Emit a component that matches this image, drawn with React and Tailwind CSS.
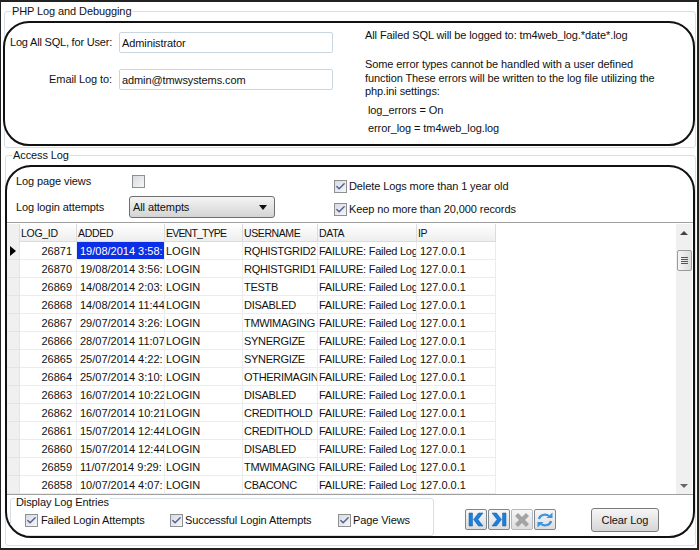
import { Check } from 'lucide-react';

const rows = [
  ['26871', '19/08/2014 3:58:', 'RQHISTGRID2'],
  ['26870', '19/08/2014 3:56:', 'RQHISTGRID1'],
  ['26869', '14/08/2014 2:03:', 'TESTB'],
  ['26868', '14/08/2014 11:44', 'DISABLED'],
  ['26867', '29/07/2014 3:26:', 'TMWIMAGING'],
  ['26866', '28/07/2014 11:07', 'SYNERGIZE'],
  ['26865', '25/07/2014 4:22:', 'SYNERGIZE'],
  ['26864', '25/07/2014 3:10:', 'OTHERIMAGING'],
  ['26863', '16/07/2014 10:22', 'DISABLED'],
  ['26862', '16/07/2014 10:21', 'CREDITHOLD'],
  ['26861', '15/07/2014 12:44', 'CREDITHOLD'],
  ['26860', '15/07/2014 12:44', 'DISABLED'],
  ['26859', '11/07/2014 9:29:', 'TMWIMAGING'],
  ['26858', '10/07/2014 4:07:', 'CBACONC'],
];

function CheckBox({ checked }) {
  return (
    <span className="flex items-center justify-center w-[13px] h-[13px] shrink-0 border border-[#8e8f8f] bg-gradient-to-br from-[#d8dbe0] to-[#f6f6f6]">
      {checked && <Check className="w-[11px] h-[11px] text-[#4a5f97]" strokeWidth={3} />}
    </span>
  );
}

function Cell({ w, className = '', children }) {
  return (
    <div className={`shrink-0 h-full overflow-hidden whitespace-nowrap border-r border-[#ececec] leading-[19px] ${w} ${className}`}>
      {children}
    </div>
  );
}

function HeadCell({ w, className = 'tracking-[-0.3px]', children }) {
  return <div className={`shrink-0 h-full border-r border-[#dcdcdc] pl-[1px] leading-[18px] text-[10.5px] ${w} ${className}`}>{children}</div>;
}

function NavButton({ disabled, children }) {
  return (
    <button className={`flex items-center justify-center w-[22px] h-[21px] rounded-[2px] border bg-gradient-to-b from-[#f6f6f6] to-[#dedede] ${disabled ? 'border-[#b4b8bb]' : 'border-[#7d8790]'}`}>
      {children}
    </button>
  );
}

export default function App() {
  return (
    <div className="w-[699px] h-[550px] overflow-hidden bg-white text-[11px] tracking-[-0.1px] text-[#111] border-t-2 border-l border-r-2 border-b-2 border-[#222] font-['Liberation_Sans',sans-serif] pt-[2px]">
      {/* PHP log group */}
      <fieldset className="ml-[3px] mr-[1px] h-[144px] rounded-[3px] border border-[#d5dfe5]">
        <legend className="ml-[6px] px-[1px] leading-[14px] h-[14px]">PHP Log and Debugging</legend>
        <div className="-ml-[2px] mt-[3px] h-[125px] rounded-[26px] border-2 border-[#111] flex">
          <div className="w-[360px] shrink-0 pt-[9px]">
            <div className="flex items-center h-[21px]">
              <span className="w-[107px] text-right whitespace-nowrap tracking-[-0.2px]">Log All SQL, for User:</span>
              <input readOnly value="Administrator" className="ml-[7px] w-[214px] h-[21px] rounded-[2px] border border-[#c9d6df] px-[2px] outline-none" />
            </div>
            <div className="flex items-center h-[21px] mt-[16px]">
              <span className="w-[107px] text-right">Email Log to:</span>
              <input readOnly value="admin@tmwsystems.com" className="ml-[7px] w-[214px] h-[21px] rounded-[2px] border border-[#c9d6df] px-[2px] outline-none" />
            </div>
          </div>
          <div className="pt-[6px] leading-[13.5px]">
            <p className="h-[15px]">All Failed SQL will be logged to: tm4web_log.*date*.log</p>
            <p className="mt-[14px] w-[300px]">Some error types cannot be handled with a user defined function These errors will be written to the log file utilizing the php.ini settings:</p>
            <p className="mt-[5px] ml-[3px]">log_errors = On</p>
            <p className="mt-[5px] ml-[3px]">error_log = tm4web_log.log</p>
          </div>
        </div>
      </fieldset>

      {/* Access log group */}
      <fieldset className="ml-[4px] mr-[1px] h-[398px] rounded-[3px] border border-[#d5dfe5]">
        <legend className="ml-[6px] px-[1px] leading-[14px] h-[14px]">Access Log</legend>
        <div className="-ml-[1px] mt-[3px] h-[373px] rounded-[26px] border-2 border-[#111] flex flex-col overflow-hidden">
          <div className="h-[55px] shrink-0 flex">
            <div className="w-[327px] shrink-0 pl-[9px]">
              <div className="flex items-center h-[14px] mt-[7px]">
                <span className="w-[116px]">Log page views</span>
                <CheckBox />
              </div>
              <div className="flex items-center mt-[8px]">
                <span className="w-[113px]">Log login attempts</span>
                <div className="relative w-[146px] h-[22px] rounded-[3px] border border-[#6f6f6f] bg-gradient-to-b from-[#f4f4f4] to-[#d4d4d4] pl-[3px] leading-[20px]">
                  All attempts
                  <span className="absolute right-[7px] top-[8px] w-0 h-0 border-l-[4px] border-r-[4px] border-t-[5px] border-l-transparent border-r-transparent border-t-[#111]" />
                </div>
              </div>
            </div>
            <div className="pt-[12px]">
              <div className="flex items-center gap-[2px] h-[14px]">
                <CheckBox checked />
                <span>Delete Logs more than 1 year old</span>
              </div>
              <div className="flex items-center gap-[2px] h-[14px] mt-[9px]">
                <CheckBox checked />
                <span>Keep no more than 20,000 records</span>
              </div>
            </div>
          </div>

          {/* Grid */}
          <div className="h-[273px] shrink-0 border-y border-[#a0a0a0] flex pt-[1px] tracking-normal">
            <div className="w-[669px] shrink-0">
              <div className="flex h-[18px]">
                <div className="w-[13px] shrink-0 border-r border-[#dcdcdc] bg-[#f0f0f0]" />
                <div className="flex h-full bg-gradient-to-b from-white to-[#eeeeee] border-b border-[#dcdcdc]">
                  <HeadCell w="w-[57px]">LOG_ID</HeadCell>
                  <HeadCell w="w-[88px]">ADDED</HeadCell>
                  <HeadCell w="w-[78px]" className="tracking-[-0.8px]">EVENT_TYPE</HeadCell>
                  <HeadCell w="w-[75px]" className="tracking-[-0.4px]">USERNAME</HeadCell>
                  <HeadCell w="w-[99px]">DATA</HeadCell>
                  <HeadCell w="w-[79px]">IP</HeadCell>
                </div>
              </div>
              {rows.map(([id, added, user], i) => (
                <div key={id} className="flex h-[18px]">
                  <div className="w-[13px] shrink-0 flex items-center border-r border-b border-[#e4e4e4] bg-[#f0f0f0]">
                    {i === 0 && <span className="ml-[3px] w-0 h-0 border-y-[5px] border-l-[6px] border-y-transparent border-l-black" />}
                  </div>
                  <div className="flex h-full border-b border-[#ececec]">
                    <Cell w="w-[57px]" className="text-right pr-[4px]">{id}</Cell>
                    <Cell w="w-[88px]" className={`pl-[3px] ${i === 0 ? 'bg-[#0a2fe6] text-white' : ''}`}>{added}</Cell>
                    <Cell w="w-[78px]" className="pl-[1px]">LOGIN</Cell>
                    <Cell w="w-[75px]" className="pl-[1px] tracking-[-0.3px]">{user}</Cell>
                    <Cell w="w-[99px]" className="pl-[1px] tracking-[-0.25px]">FAILURE: Failed Log</Cell>
                    <Cell w="w-[79px]" className="pl-[3px]">127.0.0.1</Cell>
                  </div>
                </div>
              ))}
            </div>
            <div className="w-[16px] shrink-0 bg-[#f0f0f0] flex flex-col items-center">
              <span className="mt-[7px] w-0 h-0 border-l-[4px] border-r-[4px] border-b-[4px] border-l-transparent border-r-transparent border-b-[#444]" />
              <div className="mt-[15px] w-[15px] h-[21px] rounded-[2px] border border-[#9a9a9a] bg-gradient-to-r from-[#f6f6f6] to-[#dcdcdc] flex flex-col items-center justify-center gap-[1px]">
                <span className="w-[7px] h-px bg-[#555]" />
                <span className="w-[7px] h-px bg-[#555]" />
                <span className="w-[7px] h-px bg-[#555]" />
                <span className="w-[7px] h-px bg-[#555]" />
              </div>
              <span className="mt-auto mb-[6px] w-0 h-0 border-l-[4px] border-r-[4px] border-t-[4px] border-l-transparent border-r-transparent border-t-[#666]" />
            </div>
          </div>

          {/* Footer */}
          <div className="flex items-start">
            <fieldset className="ml-[3px] -mt-[4px] w-[424px] h-[45px] rounded-[3px] border border-[#d5dfe5]">
              <legend className="ml-[4px] px-[1px] leading-[14px] h-[14px] relative top-[4px]">Display Log Entries</legend>
              <div className="flex items-center h-[14px] mt-[8px]">
                <span className="ml-[14px] w-[145px] flex items-center gap-[3px]"><CheckBox checked />Failed Login Attempts</span>
                <span className="w-[168px] flex items-center gap-[2px]"><CheckBox checked />Successful Login Attempts</span>
                <span className="flex items-center gap-[2px]"><CheckBox checked />Page Views</span>
              </div>
            </fieldset>
            <div className="flex gap-[1px] ml-[31px] mt-[14px]">
              <NavButton>
                <svg width="18" height="17" viewBox="0 0 18 17">
                  <path d="M2 2h3.5v13H2zM16 2h-4.5L6.5 8.5l5 6.5H16l-5-6.5z" fill="#1f7fd8" stroke="#0f5fb0" strokeWidth="0.5" />
                </svg>
              </NavButton>
              <NavButton>
                <svg width="18" height="17" viewBox="0 0 18 17">
                  <path d="M16 2h-3.5v13H16zM2 2h4.5l5 6.5-5 6.5H2l5-6.5z" fill="#1f7fd8" stroke="#0f5fb0" strokeWidth="0.5" />
                </svg>
              </NavButton>
              <NavButton disabled>
                <svg width="16" height="16" viewBox="0 0 16 16">
                  <path d="M1 4l3-3 4 4 4-4 3 3-4 4 4 4-3 3-4-4-4 4-3-3 4-4z" fill="#a3a3a3" />
                </svg>
              </NavButton>
              <NavButton>
                <svg width="18" height="18" viewBox="0 0 18 18" fill="none" stroke="#3a94e0" strokeWidth="2.2">
                  <path d="M3 8a6 5 0 0 1 10-3" />
                  <path d="M15 10a6 5 0 0 1-10 3" />
                  <path d="M10.5 7h6V1.5z" fill="#3a94e0" stroke="none" />
                  <path d="M7.5 11h-6v5.5z" fill="#3a94e0" stroke="none" />
                </svg>
              </NavButton>
            </div>
            <button className="ml-[35px] mt-[13px] w-[68px] h-[24px] rounded-[3px] border border-[#7b7b7b] bg-gradient-to-b from-[#f6f6f6] to-[#d6d6d6]">Clear Log</button>
          </div>
        </div>
      </fieldset>
    </div>
  );
}
